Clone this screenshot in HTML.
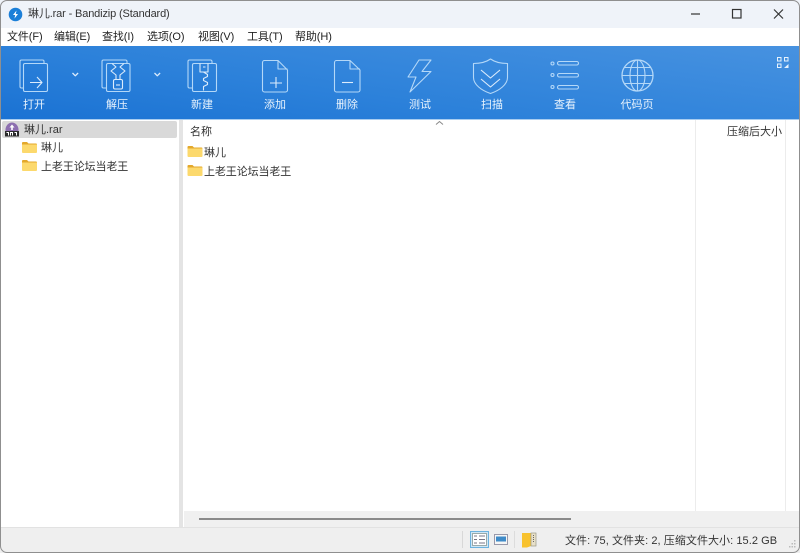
<!DOCTYPE html>
<html><head><meta charset="utf-8"><style>
html,body{margin:0;padding:0;background:#fff}
body{width:800px;height:553px;position:relative;overflow:hidden;font-family:"Liberation Sans","Noto Sans CJK SC",sans-serif;font-size:11px;color:#222}
.a{position:absolute;white-space:nowrap}
.m{top:30px;line-height:14px;font-size:11px;color:#222;letter-spacing:-.1px}
.t{top:98px;width:60px;text-align:center;color:#e8f3fd;font-size:11px;line-height:14px}
.r{font-size:11px;line-height:14px;color:#333}
</style></head><body>
<div class="a" style="left:0;top:0;width:800px;height:28px;background:#eff3f9"></div>
<div class="a" style="left:0;top:46px;width:800px;height:73px;background:linear-gradient(188deg,#4792e0 0%,#2c81da 60%,#1a72d3 100%)"></div>
<div class="a" style="left:0;top:119px;width:800px;height:1px;background:#a9cdf0"></div>
<svg class="a" style="left:8px;top:7px" width="15" height="15" viewBox="0 0 15 15"><circle cx="7.5" cy="7.5" r="6.8" fill="#1b7fd8"/><path d="M8.500 3.500 5 8h2.200L6.500 11.500 10 7H7.800z" fill="#fff"/></svg>
<div class="a r" style="left:28px;top:7px;line-height:15px;letter-spacing:-.14px">琳儿.rar - Bandizip (Standard)</div>
<svg class="a" style="left:680px;top:0" width="120" height="28" viewBox="0 0 120 28" fill="none" stroke="#333" stroke-width="1.2"><path d="M11 14h9"/><rect x="52.500" y="9.500" width="8.500" height="8.500"/><path d="M94 9.500l9 9M103 9.500l-9 9"/></svg>
<div class="a m" style="left:7px">文件(F)</div>
<div class="a m" style="left:54px">编辑(E)</div>
<div class="a m" style="left:102px">查找(I)</div>
<div class="a m" style="left:147px">选项(O)</div>
<div class="a m" style="left:198px">视图(V)</div>
<div class="a m" style="left:247px">工具(T)</div>
<div class="a m" style="left:295px">帮助(H)</div>
<svg class="a" style="left:0;top:46px" width="800" height="73" viewBox="0 46 800 73" fill="none" stroke="#b4d8f8" stroke-width="1.1" stroke-linejoin="round">
<path d="M23 88h-1.500a1.500 1.500 0 0 1-1.500-1.500V61.500a1.500 1.500 0 0 1 1.500-1.500H42.500a1.500 1.500 0 0 1 1.500 1.500V63"/>
<rect x="23.500" y="63.500" width="24" height="28" rx="1.500"/>
<path d="M30 82.500h11.500M37 77l5 5.500-5 5.500" stroke="#dcecfc"/>
<path d="M72.500 73l2.800 2.800 2.800-2.800M154.500 73l2.800 2.800 2.800-2.800" stroke="#dcecfc" stroke-width="1.300"/>
<path d="M106 88h-2.500a1.500 1.500 0 0 1-1.500-1.500V61.500a1.500 1.500 0 0 1 1.500-1.500H125.500a1.500 1.500 0 0 1 1.500 1.500V63"/>
<rect x="106.500" y="63.500" width="23.500" height="28" rx="1.500"/>
<path d="M112 63.500l4 3.500-5 4 5 4v4.500M124 63.500l-4 3.500 5 4-5 4v4.500" stroke="#dcecfc"/>
<rect x="113.500" y="79.500" width="9" height="9.500" rx="1.500" stroke="#dcecfc"/><path d="M116 85h4" stroke="#dcecfc"/>
<path d="M192 88h-2.500a1.500 1.500 0 0 1-1.500-1.500V61.500a1.500 1.500 0 0 1 1.500-1.500H210.500a1.500 1.500 0 0 1 1.500 1.500V63"/>
<rect x="192.500" y="63.500" width="24" height="28" rx="1.500"/>
<path d="M200 63.500v8.500h8v-8.500M203 67h2.500M203.500 72l4 2.500v2l-4 2v2l4 2v2l-4 2v4" stroke="#dcecfc"/>
<path d="M262.500 90V62.500a2 2 0 0 1 2-2H278l9.500 9.500V90a2 2 0 0 1-2 2h-21a2 2 0 0 1-2-2zM278 60.500V69h9.500"/>
<path d="M270 83h12M276 77v11" stroke="#dcecfc"/>
<path d="M334.500 90V62.500a2 2 0 0 1 2-2H350l10 9.500V90a2 2 0 0 1-2 2h-21.500a2 2 0 0 1-2-2zM350 60.500V69h10"/>
<path d="M342 82.500h11" stroke="#dcecfc"/>
<path d="M419 60h12l-9 11.500h9L410 92l6-15h-8z"/>
<path d="M490.500 59c5 3.500 12 4.500 17 4.500v14c0 7-8 13-17 16-9-3-17-9-17-16v-14c5 0 12-1 17-4.500z"/>
<path d="M481 70l9.500 8 9.500-8M481 79l9.500 8 9.500-8" stroke="#dcecfc"/>
<circle cx="552.500" cy="63.500" r="1.500"/><circle cx="552.500" cy="75" r="1.500"/><circle cx="552.500" cy="87" r="1.500"/>
<rect x="557.500" y="61.500" width="21" height="3.500" rx="1.700"/><rect x="557.500" y="73.500" width="21" height="3.500" rx="1.700"/><rect x="557.500" y="85.500" width="21" height="3.500" rx="1.700"/>
<circle cx="637.500" cy="75.500" r="15.500" stroke-width="1.300"/><ellipse cx="637.500" cy="75.500" rx="7.500" ry="15.500"/><path d="M637.500 60v31M622 75.500h31M624.500 67.500h26M624.500 83.500h26"/>
</svg>
<svg class="a" style="left:776px;top:56px" width="14" height="13" viewBox="0 0 14 13" fill="none" stroke="#e6f2fd"><rect x="1.500" y="1.500" width="3.500" height="3.500"/><rect x="8.500" y="1.500" width="3.500" height="3.500"/><rect x="1.500" y="8" width="3.500" height="3.500"/><path d="M8 12h4.500V8z" fill="#e6f2fd" stroke="none"/></svg>
<div class="a t" style="left:4px">打开</div>
<div class="a t" style="left:87px">解压</div>
<div class="a t" style="left:172px">新建</div>
<div class="a t" style="left:245px">添加</div>
<div class="a t" style="left:317px">删除</div>
<div class="a t" style="left:390px">测试</div>
<div class="a t" style="left:462px">扫描</div>
<div class="a t" style="left:535px">查看</div>
<div class="a t" style="left:607px">代码页</div>

<div class="a" style="left:2px;top:121px;width:175px;height:17px;background:#d9d9d9;border-radius:2px"></div>
<div class="a" style="left:179px;top:120px;width:4px;height:407px;background:#e4e4e4"></div>
<svg class="a" style="left:4px;top:122px" width="16" height="15" viewBox="0 0 16 15"><path d="M8 .500C11 .500 14 3 14.500 7v3h-13V7C2 3 5 .500 8 .500z" fill="#8d6fb0"/><path d="M8 2.500 5.500 5.500h1.700v2.500h1.600V5.500h1.700z" fill="#fff"/><rect x="1" y="9" width="14" height="5.500" fill="#2a2a2a"/><path d="M2.500 10.500h2v3M6.500 13.500v-3h2v3M10.500 10.500h2v3" stroke="#fff" fill="none"/></svg>
<div class="a r" style="left:24px;top:123px">琳儿.rar</div>
<svg class="a" style="left:22px;top:141px" width="15" height="13" viewBox="0 0 15 13"><path d="M0 2a1 1 0 0 1 1-1h4l1.500 1.500H14a1 1 0 0 1 1 1V4H0z" fill="#e3a82b"/><path d="M0 3.500h15V11a1 1 0 0 1-1 1H1a1 1 0 0 1-1-1z" fill="#fcd96d"/></svg>
<div class="a r" style="left:41px;top:141px">琳儿</div>
<svg class="a" style="left:22px;top:159px" width="15" height="13" viewBox="0 0 15 13"><path d="M0 2a1 1 0 0 1 1-1h4l1.500 1.500H14a1 1 0 0 1 1 1V4H0z" fill="#e3a82b"/><path d="M0 3.500h15V11a1 1 0 0 1-1 1H1a1 1 0 0 1-1-1z" fill="#fcd96d"/></svg>
<div class="a r" style="left:41px;top:160px;letter-spacing:-.1px">上老王论坛当老王</div>

<div class="a r" style="left:190px;top:125px">名称</div>
<svg class="a" style="left:435px;top:120px" width="9" height="6" viewBox="0 0 9 6" fill="none" stroke="#888"><path d="M1 4.500l3.500-3 3.500 3"/></svg>
<div class="a" style="left:695px;top:120px;width:1px;height:391px;background:#ececec"></div>
<div class="a" style="left:785px;top:120px;width:1px;height:391px;background:#ececec"></div>
<div class="a r" style="left:727px;top:125px">压缩后大小</div>
<svg class="a" style="left:187px;top:145px" width="16" height="13" viewBox="0 0 15 13"><path d="M0 2a1 1 0 0 1 1-1h4l1.500 1.500H14a1 1 0 0 1 1 1V4H0z" fill="#e3a82b"/><path d="M0 3.500h15V11a1 1 0 0 1-1 1H1a1 1 0 0 1-1-1z" fill="#fcd96d"/></svg>
<div class="a r" style="left:204px;top:146px">琳儿</div>
<svg class="a" style="left:187px;top:164px" width="16" height="13" viewBox="0 0 15 13"><path d="M0 2a1 1 0 0 1 1-1h4l1.500 1.500H14a1 1 0 0 1 1 1V4H0z" fill="#e3a82b"/><path d="M0 3.500h15V11a1 1 0 0 1-1 1H1a1 1 0 0 1-1-1z" fill="#fcd96d"/></svg>
<div class="a r" style="left:204px;top:165px;letter-spacing:-.1px">上老王论坛当老王</div>

<div class="a" style="left:184px;top:511px;width:616px;height:16px;background:#f0f0f0"></div>
<div class="a" style="left:199px;top:518px;width:372px;height:2px;background:#8a8a8a"></div>
<div class="a" style="left:0;top:527px;width:800px;height:26px;background:#efefef;border-top:1px solid #e2e2e2;box-sizing:border-box"></div>
<div class="a" style="left:462px;top:531px;width:1px;height:17px;background:#d8d8d8"></div>
<div class="a" style="left:514px;top:531px;width:1px;height:17px;background:#dcdcdc"></div>
<svg class="a" style="left:470px;top:531px" width="19" height="17" viewBox="0 0 19 17" fill="none"><rect x=".5" y=".5" width="18" height="16" fill="#cfe6f6" stroke="#6cb2de"/><rect x="2.500" y="2.500" width="14" height="12" fill="#fff" stroke="#9aa"/><path d="M4 5h3M4 8.500h3M4 12h3M9 5h6M9 8.500h6M9 12h6" stroke="#778"/></svg>
<svg class="a" style="left:494px;top:534px" width="14" height="11" viewBox="0 0 14 11"><rect x=".5" y=".5" width="13" height="10" fill="#f6f6f6" stroke="#99a"/><rect x="2" y="2.500" width="10" height="5" fill="#3f8bc8"/></svg>
<svg class="a" style="left:521px;top:532px" width="16" height="16" viewBox="0 0 16 16"><path d="M1 1h9v13l-4 1.500H1z" fill="#f8c22e"/><rect x="10" y="1" width="5" height="13" fill="#e8e0c8" stroke="#998" stroke-width=".7"/><path d="M12.500 3v8" stroke="#666" stroke-dasharray="1 1"/></svg>
<div class="a r" style="left:565px;top:534px;letter-spacing:.06px">文件: 75, 文件夹: 2, 压缩文件大小: 15.2 GB</div>
<svg class="a" style="left:786px;top:539px" width="12" height="12" viewBox="0 0 12 12" fill="#bbb"><rect x="8" y="1" width="1.500" height="1.500"/><rect x="5.500" y="4" width="1.500" height="1.500"/><rect x="8" y="4" width="1.500" height="1.500"/><rect x="3" y="7" width="1.500" height="1.500"/><rect x="5.500" y="7" width="1.500" height="1.500"/><rect x="8" y="7" width="1.500" height="1.500"/></svg>
<div class="a" style="left:0;top:0;width:800px;height:553px;box-sizing:border-box;border:1px solid #8f8f8f;border-radius:7px"></div>
</body></html>
